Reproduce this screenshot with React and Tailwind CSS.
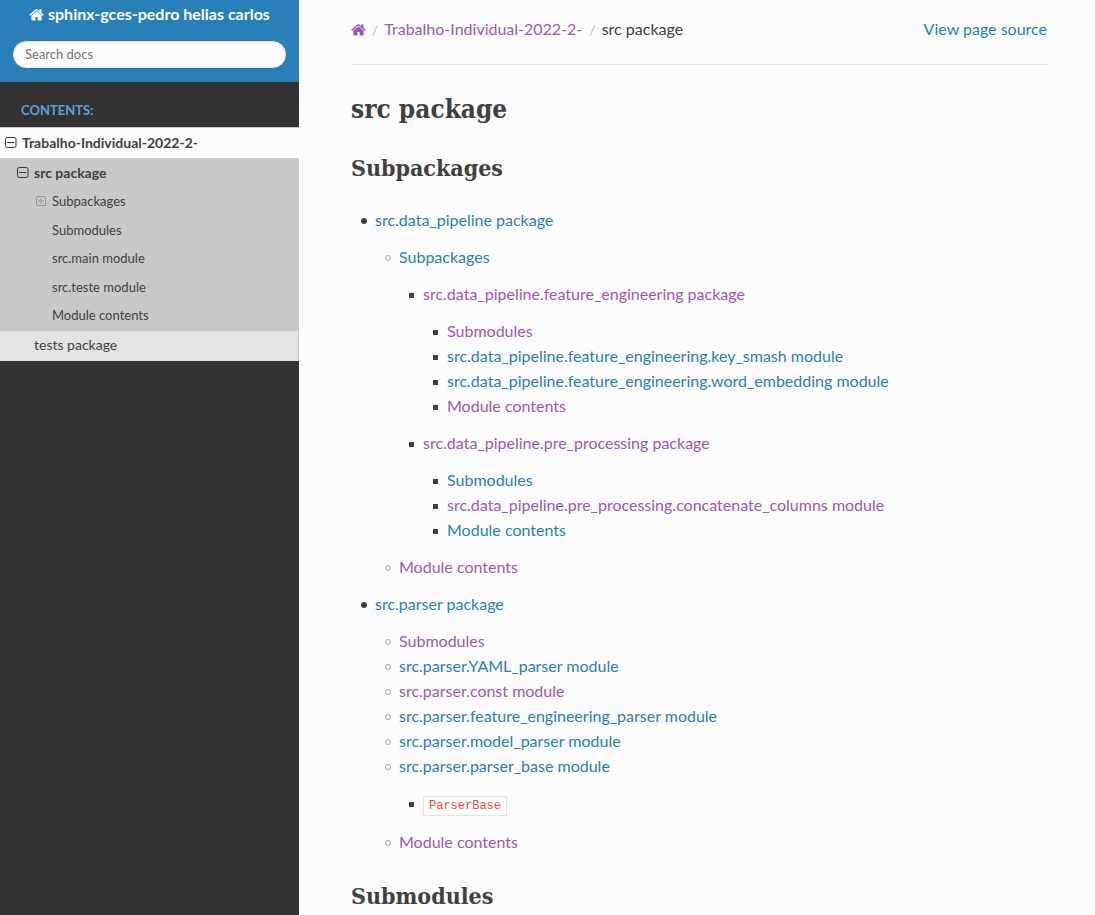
import React from "react";

const BLUE = "text-[#2980b9]";
const PURPLE = "text-[#9b59b6]";

const DISC = "before:mr-2 before:size-1.5 before:rounded-full before:bg-[#404040]";
const CIRCLE = "before:mr-2 before:size-1.5 before:rounded-full before:border before:border-[#a3a3a3]";
const SQUARE = "before:mr-[9px] before:size-[5px] before:bg-[#404040]";
const MARKERS = [DISC, CIRCLE, SQUARE, SQUARE];

const toctree = [
  {
    label: "src.data_pipeline package",
    children: [
      {
        label: "Subpackages",
        children: [
          {
            label: "src.data_pipeline.feature_engineering package",
            visited: true,
            children: [
              { label: "Submodules", visited: true },
              { label: "src.data_pipeline.feature_engineering.key_smash module" },
              { label: "src.data_pipeline.feature_engineering.word_embedding module" },
              { label: "Module contents", visited: true },
            ],
          },
          {
            label: "src.data_pipeline.pre_processing package",
            visited: true,
            children: [
              { label: "Submodules" },
              { label: "src.data_pipeline.pre_processing.concatenate_columns module", visited: true },
              { label: "Module contents" },
            ],
          },
        ],
      },
      { label: "Module contents", visited: true },
    ],
  },
  {
    label: "src.parser package",
    children: [
      { label: "Submodules", visited: true },
      { label: "src.parser.YAML_parser module" },
      { label: "src.parser.const module", visited: true },
      { label: "src.parser.feature_engineering_parser module" },
      { label: "src.parser.model_parser module" },
      {
        label: "src.parser.parser_base module",
        children: [{ label: "ParserBase", code: true }],
      },
      { label: "Module contents", visited: true },
    ],
  },
];

function HomeIcon() {
  return (
    <svg viewBox="64 128 1664 1472" className="inline-block h-[13px] w-[15px] align-[-1px]" fill="currentColor" aria-hidden="true">
      <path d="M1472 992v480q0 26-19 45t-45 19h-384v-384h-256v384h-384q-26 0-45-19t-19-45v-480q0-1 .5-3t.5-3l575-474 575 474q1 2 1 6zm223-69l-62 74q-8 9-21 11h-3q-13 0-21-7l-692-577-692 577q-12 8-24 7-13-2-21-11l-62-74q-8-10-7-23.5t11-21.5l719-599q32-26 76-26t76 26l244 204v-195q0-14 9-23t23-9h192q14 0 23 9t9 23v408l219 182q10 8 11 21.5t-7 23.5z" />
    </svg>
  );
}

function Toggle({ open, small, label }) {
  return (
    <button type="button" aria-label={label} aria-expanded={open} className={small ? "text-[#999]" : "text-[#333]"}>
      <svg viewBox={small ? "0 0 11 11" : "0 0 12 12"} className={small ? "block size-[11px]" : "block size-3"} fill="none" stroke="currentColor" aria-hidden="true">
        {small ? (
          <rect x="0.5" y="0.5" width="9" height="9" rx="1.5" />
        ) : (
          <rect x="0.5" y="0.5" width="10.5" height="10" rx="1.8" />
        )}
        {small ? <path d={open ? "M2 5h6" : "M2 5h6M5 2v6"} /> : <path d={open ? "M2.2 5.5h7" : "M2.2 5.5h7M5.7 2v7"} />}
      </svg>
    </button>
  );
}

function Tree({ items, depth = 0 }) {
  return (
    <ul className={depth ? "my-3" : ""}>
      {items.map((item) => (
        <li
          key={item.label}
          className={`ml-6 before:-ml-[14px] before:inline-block before:align-[2px] before:content-[''] ${MARKERS[depth]} ${item.code ? "pb-px leading-[26px]" : "leading-[25px]"}`}
        >
          <a href="#" className={item.visited ? PURPLE : BLUE}>
            {item.code ? (
              <code className="border border-[#e1e4e5] bg-white px-[5px] py-0.5 font-['Liberation_Mono',monospace] text-xs text-[#e74c3c]">
                {item.label}
              </code>
            ) : (
              item.label
            )}
          </a>
          {item.children && <Tree items={item.children} depth={depth + 1} />}
        </li>
      ))}
    </ul>
  );
}

function Sidebar() {
  return (
    <nav aria-label="Contents" className="w-[299px] shrink-0 bg-[#343131] text-[#404040]">
      <div className="flex flex-col items-center bg-[#2980b9] px-3 pt-[3px] pb-[13px]">
        <a href="#" className="text-base leading-[22px] font-bold text-[#fcfcfc]">
          <HomeIcon /> sphinx-gces-pedro helias carlos
        </a>
        <input
          type="text"
          aria-label="Search docs"
          placeholder="Search docs"
          className="mt-[15px] h-[29px] w-full rounded-full border border-[#2472a4] bg-[#fcfcfc] px-3 pb-0.5 text-[13px] shadow-[inset_0_1px_3px_#ddd] placeholder:text-[#757575]"
        />
      </div>
      <p className="mt-3 px-[21px] pb-px text-[13px] leading-8 font-bold text-[#55a5d9] uppercase">Contents:</p>
      <ul className="bg-[#e3e3e3] text-sm">
        <li>
          <div className="flex h-[31px] items-center gap-[5px] border-t border-[#c9c9c9] bg-[#fcfcfc] pb-px pl-[5px] font-bold">
            <Toggle open label="Toggle Trabalho-Individual-2022-2-" />
            <a href="#">Trabalho-Individual-2022-2-</a>
          </div>
          <ul>
            <li className="bg-[#c9c9c9]">
              <div className="flex h-[30px] items-center gap-[5px] pb-px pl-[17px] font-bold">
                <Toggle open label="Toggle src package" />
                <a href="#">src package</a>
              </div>
              <ul className="grid h-[143px] grid-rows-5 items-center pb-px text-[13px]">
                <li className="flex items-center gap-[5px] pb-0.5 pl-[36px]">
                  <Toggle small label="Toggle Subpackages" />
                  <a href="#">Subpackages</a>
                </li>
                {["Submodules", "src.main module", "src.teste module", "Module contents"].map((t) => (
                  <li key={t} className="pb-px pl-[52px]">
                    <a href="#">{t}</a>
                  </li>
                ))}
              </ul>
            </li>
            <li className="flex h-[30px] items-center border-r border-[#c9c9c9] pb-0.5 pl-[34px]">
              <a href="#">tests package</a>
            </li>
          </ul>
        </li>
      </ul>
    </nav>
  );
}

function Heading({ as: Tag, className, children }) {
  return (
    <Tag className={`font-['Roboto_Slab','DejaVu_Serif_Condensed','DejaVu_Serif',serif] font-bold ${className}`}>{children}</Tag>
  );
}

export default function App() {
  return (
    <div className="flex h-screen overflow-hidden bg-[#fcfcfc] font-['Lato','Liberation_Sans',sans-serif] text-base text-[#404040]">
      <Sidebar />
      <main className="min-w-0 flex-1 overflow-hidden pt-[17px] pr-12 pl-[52px]">
        <div className="flex justify-between border-b border-[#e1e4e5] pb-[23px] leading-6">
          <nav aria-label="Breadcrumb">
            <ol className="flex">
              <li>
                <a href="#" aria-label="Home" className={PURPLE}>
                  <HomeIcon />
                </a>
              </li>
              <li className="before:px-1.5 before:text-sm before:text-[#bbb] before:content-['/']">
                <a href="#" className={PURPLE}>Trabalho-Individual-2022-2-</a>
              </li>
              <li className="before:pr-1.5 before:pl-[7px] before:text-sm before:text-[#bbb] before:content-['/']">src package</li>
            </ol>
          </nav>
          <a href="#" className={BLUE}>View page source</a>
        </div>
        <article>
          <Heading as="h1" className="mt-6 text-[26px] leading-10">src package</Heading>
          <Heading as="h2" className="mt-[23px] mb-[23px] text-[23px] leading-8">Subpackages</Heading>
          <Tree items={toctree} />
          <Heading as="h2" className="mt-[26px] text-[23px] leading-8">Submodules</Heading>
        </article>
      </main>
    </div>
  );
}
